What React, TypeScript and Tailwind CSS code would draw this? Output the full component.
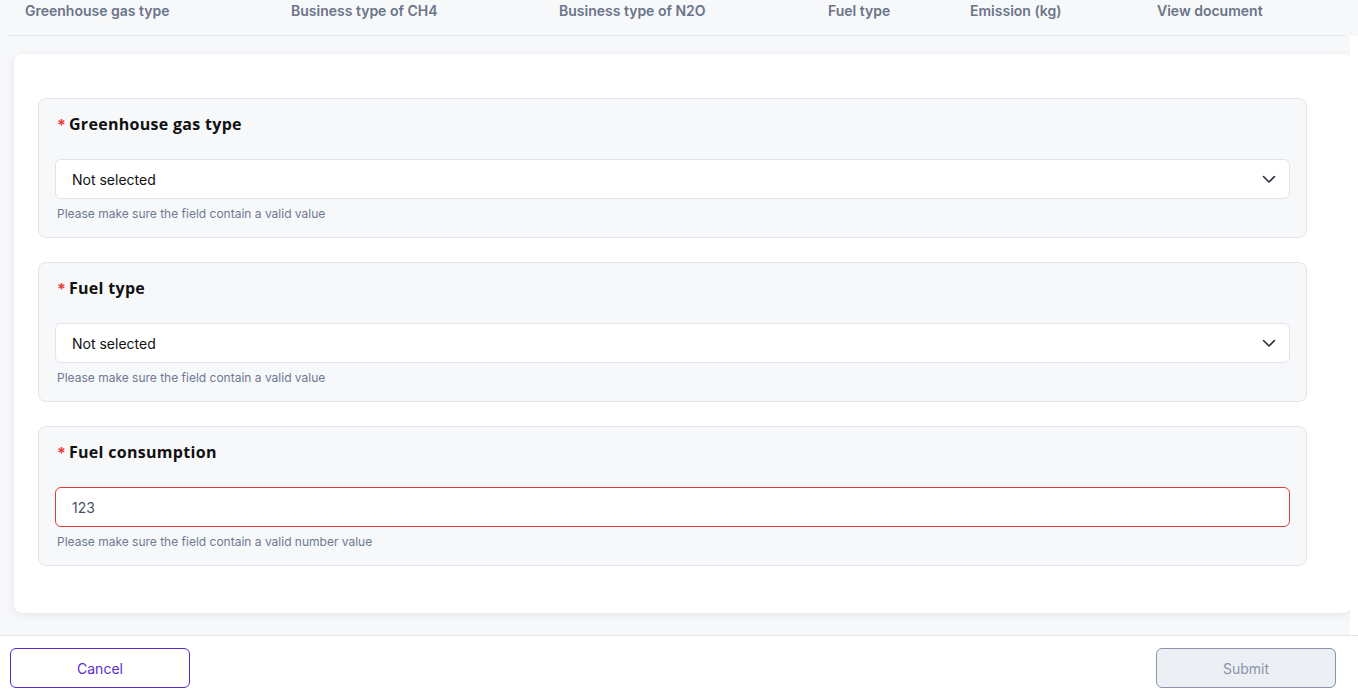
import React from 'react';

const columns = [
  { label: 'Greenhouse gas type', w: 'w-[266px]' },
  { label: 'Business type of CH4', w: 'w-[268px]' },
  { label: 'Business type of N2O', w: 'w-[269px]' },
  { label: 'Fuel type', w: 'w-[142px]' },
  { label: 'Emission (kg)', w: 'w-[187px]' },
  { label: 'View document', w: 'w-[180px]' },
];

function Chevron() {
  return (
    <svg width="16" height="16" viewBox="0 0 16 16" fill="none">
      <path d="M2.5 5.5L8 11L13.5 5.5" stroke="#2a2f3a" strokeWidth="1.6" strokeLinecap="round" strokeLinejoin="round" />
    </svg>
  );
}

function Field({ label, children, hint }: { label: string; children: React.ReactNode; hint: string }) {
  return (
    <div className="rounded-lg border border-[#e1e4eb] bg-[#f7f8fa] px-4 pt-[13px] pb-[15px]">
      <div className="flex items-center gap-[3px] pl-[2px] h-[24px]">
        <span className="text-[16px] font-bold text-[#ef3b3b] leading-none mt-[2px]">*</span>
        <span className="text-[16px] font-bold text-[#111] tracking-[0.3px]" style={{ fontFamily: '"Open Sans", sans-serif' }}>
          {label}
        </span>
      </div>
      <div className="mt-[23px]">{children}</div>
      <p className="mt-[7px] pl-[2px] text-[12px] text-[#6e7893] leading-[16px]">{hint}</p>
    </div>
  );
}

export default function App() {
  return (
    <div className="w-[1358px] h-[696px] overflow-hidden flex flex-col bg-white" style={{ fontFamily: 'Inter, "Liberation Sans", sans-serif' }}>
      <div className="flex-1 bg-[#f7f8fa] flex flex-col relative">
        {/* Table header */}
        <div className="mx-[8px] mr-[12px] h-[36px] border-b border-[#e3e6ec] flex items-start pt-[2px] pl-[17px]">
          {columns.map((c) => (
            <div key={c.label} className={`${c.w} text-[14px] font-semibold text-[#6b7488] leading-[18px]`}>
              {c.label}
            </div>
          ))}
        </div>
        <div className="absolute right-0 top-[36px] bottom-0 w-[8px] bg-white" />

        {/* Form card */}
        <div className="mt-[18px] ml-[14px] w-[1337px] rounded-lg bg-white shadow-[0_2px_8px_rgba(20,30,60,0.08)] pt-[44px] pb-[47px] pl-[24px] pr-[44px] flex flex-col gap-[24px]">
          <Field label="Greenhouse gas type" hint="Please make sure the field contain a valid value">
            <div className="h-[40px] rounded-md border border-[#e1e4eb] bg-white flex items-center justify-between pl-[16px] pr-[12px]">
              <span className="text-[14px] text-[#111]">Not selected</span>
              <Chevron />
            </div>
          </Field>
          <Field label="Fuel type" hint="Please make sure the field contain a valid value">
            <div className="h-[40px] rounded-md border border-[#e1e4eb] bg-white flex items-center justify-between pl-[16px] pr-[12px]">
              <span className="text-[14px] text-[#111]">Not selected</span>
              <Chevron />
            </div>
          </Field>
          <Field label="Fuel consumption" hint="Please make sure the field contain a valid number value">
            <div className="h-[40px] rounded-md border border-[#e33b3b] bg-white flex items-center pl-[16px]">
              <span className="text-[14px] text-[#4b5263]">123</span>
            </div>
          </Field>
        </div>
        <div className="flex-1" />
      </div>

      {/* Footer */}
      <div className="h-[61px] border-t border-[#e1e4eb] bg-white flex items-start justify-between pt-[12px] pl-[10px] pr-[22px]">
        <button className="w-[180px] h-[40px] rounded-md border border-[#5a2ccf] text-[#5a2ccf] text-[14px] bg-white">
          Cancel
        </button>
        <button className="w-[180px] h-[40px] rounded-md border border-[#8a93aa] text-[#8a93aa] text-[14px] bg-[#eceff4]">
          Submit
        </button>
      </div>
    </div>
  );
}
